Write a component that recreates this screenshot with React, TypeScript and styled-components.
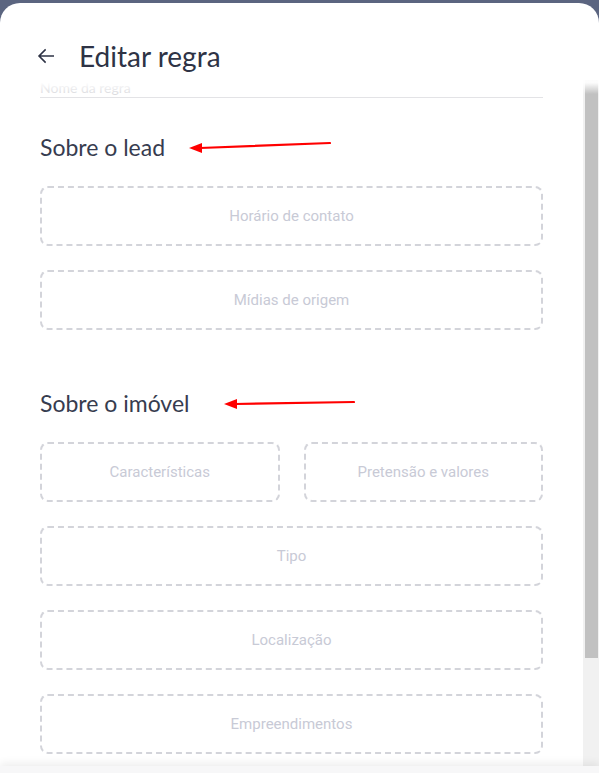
import React from "react";
import styled, { createGlobalStyle } from "styled-components";

const GlobalStyle = createGlobalStyle`
  html, body {
    margin: 0;
    padding: 0;
    background: #5b6580;
    font-family: Lato, "Open Sans", sans-serif;
    overflow: hidden;
  }
`;

const Page = styled.div`
  padding-top: 3px;
  height: 100vh;
  box-sizing: border-box;
`;

const Panel = styled.div`
  background: #fff;
  border-radius: 20px 20px 0 0;
  height: 770px;
  overflow: hidden;
  display: flex;
  flex-direction: column;
`;

const Header = styled.div`
  height: 77px;
  flex: none;
  box-sizing: border-box;
  padding: 36px 0 0 34px;
  display: flex;
  align-items: flex-start;
  gap: 21px;
`;

const BackButton = styled.button`
  border: 0;
  background: none;
  padding: 0;
  margin-top: 5px;
  width: 24px;
  height: 24px;
  color: #2e3345;
  cursor: pointer;
  display: flex;
`;

const Title = styled.h1`
  margin: 0;
  font-family: Lato, sans-serif;
  font-weight: 400;
  font-size: 28px;
  line-height: 34px;
  color: #2e3345;
`;

const ScrollWrap = styled.div`
  position: relative;
  height: 686px;
  flex: none;
  display: flex;
`;

const Fade = styled.div`
  position: absolute;
  left: 0;
  right: 0;
  top: 0;
  height: 14px;
  background: linear-gradient(rgba(255, 255, 255, 0.95) 20%, rgba(255, 255, 255, 0));
  pointer-events: none;
`;

const Scroll = styled.div`
  flex: 1;
  min-width: 0;
  overflow: hidden;
  box-sizing: border-box;
  padding: 0 40px;
`;

const Rail = styled.div`
  width: 16px;
  flex: none;
  background: #f1f1f1;
  box-sizing: border-box;
  padding: 0 1px 0 2px;
`;

const Thumb = styled.div<{ $size: number }>`
  height: ${(p) => p.$size}px;
  background: #c1c1c1;
`;

const Field = styled.div`
  height: 17px;
  box-sizing: content-box;
  border-bottom: 1px solid #e3e3e6;
  font-size: 14px;
  line-height: 16px;
  color: #dcdce0;
`;

const SectionHead = styled.div<{ $top: number }>`
  margin-top: ${(p) => p.$top}px;
  display: flex;
  align-items: center;
  height: 24px;
`;

const Heading = styled.h2`
  margin: 0;
  font-family: Lato, sans-serif;
  font-weight: 400;
  font-size: 23px;
  line-height: 24px;
  color: #373c4f;
`;

const Pointer = styled.svg<{ $gap: number }>`
  margin-left: ${(p) => p.$gap}px;
  flex: none;
`;

const BoxList = styled.div`
  margin-top: 27px;
  display: flex;
  flex-direction: column;
  gap: 24px;
`;

const BoxRow = styled.div`
  display: grid;
  grid-template-columns: 1fr 1fr;
  gap: 24px;
`;

const DropBox = styled.div`
  height: 60px;
  box-sizing: border-box;
  border: 2px dashed #d3d4da;
  border-radius: 8px;
  display: flex;
  align-items: center;
  justify-content: center;
  font-family: Roboto, sans-serif;
  font-size: 15px;
  color: #c8cad6;
`;

const Footer = styled.div`
  height: 60px;
  flex: none;
  background: #f7f7f8;
  box-shadow: 0 -3px 8px rgba(0, 0, 0, 0.07);
  position: relative;
`;

function RedArrow({ gap, width, rise }: { gap: number; width: number; rise: number }) {
  const y = 9;
  return (
    <Pointer $gap={gap} width={width} height={16} viewBox={`0 0 ${width} 16`}>
      <line x1={12} y1={y} x2={width - 1} y2={y - rise} stroke="#ff0000" strokeWidth={2.2} strokeLinecap="round" />
      <polygon points={`1,${y} 14,${y - 5} 14,${y + 5}`} fill="#ff0000" />
    </Pointer>
  );
}

export default function App() {
  return (
    <>
      <GlobalStyle />
      <Page>
        <Panel>
          <Header>
            <BackButton aria-label="Voltar">
              <svg width="24" height="24" viewBox="0 0 24 24" fill="currentColor">
                <path d="M20 11.2H6.9l5.3-5.3-1.1-1.1L3.9 12l7.2 7.2 1.1-1.1-5.3-5.3H20z" />
              </svg>
            </BackButton>
            <Title>Editar regra</Title>
          </Header>
          <ScrollWrap>
            <Scroll>
              <Field>Nome da regra</Field>
              <SectionHead $top={37}>
                <Heading>Sobre o lead</Heading>
                <RedArrow gap={23} width={143} rise={5} />
              </SectionHead>
              <BoxList>
                <DropBox>Horário de contato</DropBox>
                <DropBox>Mídias de origem</DropBox>
              </BoxList>
              <SectionHead $top={61}>
                <Heading>Sobre o imóvel</Heading>
                <RedArrow gap={34} width={132} rise={2} />
              </SectionHead>
              <BoxList>
                <BoxRow>
                  <DropBox>Características</DropBox>
                  <DropBox>Pretensão e valores</DropBox>
                </BoxRow>
                <DropBox>Tipo</DropBox>
                <DropBox>Localização</DropBox>
                <DropBox>Empreendimentos</DropBox>
              </BoxList>
            </Scroll>
            <Rail>
              <Thumb $size={578} />
            </Rail>
            <Fade />
          </ScrollWrap>
          <Footer />
        </Panel>
      </Page>
    </>
  );
}
